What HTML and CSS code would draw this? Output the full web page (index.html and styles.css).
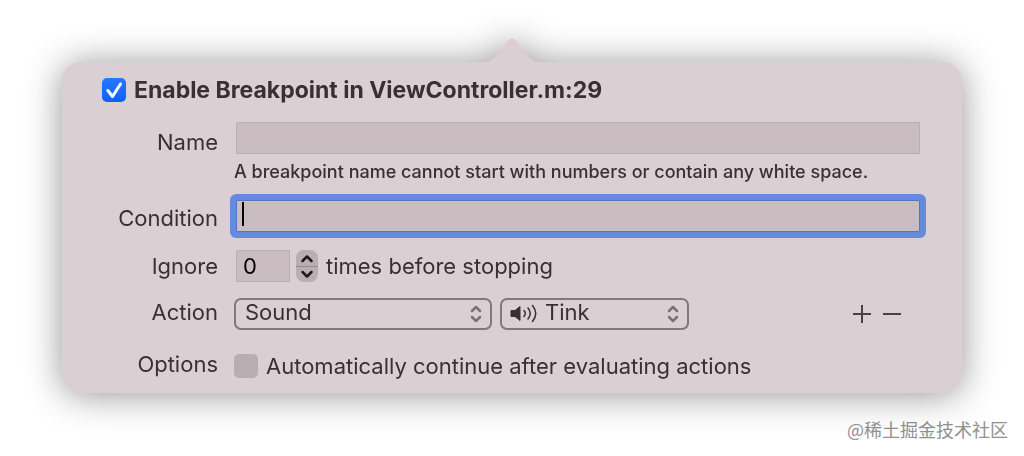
FILE: index.html
```html
<!DOCTYPE html>
<html lang="en">
<head>
<meta charset="utf-8">
<title>Edit Breakpoint</title>
<link rel="stylesheet" href="styles.css">
</head>
<body>
<main class="popover">
  <svg class="arrow" viewBox="0 0 58 25" aria-hidden="true"><path d="M0 25V24C9 24 13 18 18 11L25 2.500Q29 -2 33 2.500L40 11C45 18 49 24 58 24V25Z"/></svg>
  <form class="panel">
    <label class="title"><span class="box"><input class="check" type="checkbox" checked><svg class="tick" viewBox="0 0 24 24" aria-hidden="true"><path d="M5.800 12.500l4.700 6L18.500 6"/></svg></span><span>Enable Breakpoint in ViewController.m:29</span></label>
    <div class="grid">
      <label class="label label-name" for="name">Name</label>
      <div class="stack">
        <input class="field" id="name" type="text">
        <p class="hint">A breakpoint name cannot start with numbers or contain any white space.</p>
      </div>
      <label class="label label-condition" for="condition">Condition</label>
      <div class="focus-wrap">
        <input class="field field-active" id="condition" type="text">
        <span class="caret"></span>
      </div>
      <label class="label" for="ignore">Ignore</label>
      <div class="ignore">
        <input class="field field-count" id="ignore" type="text" value="0">
        <div class="stepper">
          <button type="button" aria-label="Increase"><svg viewBox="0 0 22 16"><path d="M6.500 11L11 6.500l4.500 4.500"/></svg></button>
          <button type="button" aria-label="Decrease"><svg viewBox="0 0 22 16"><path d="M6.500 5L11 9.500 15.500 5"/></svg></button>
        </div>
        <span>times before stopping</span>
      </div>
      <label class="label label-action" for="action">Action</label>
      <div class="actions">
        <div class="picker picker-action">
          <select id="action"><option>Sound</option></select>
          <svg class="chevrons" viewBox="0 0 12 18" aria-hidden="true"><path d="M2 6l4-4 4 4M2 12l4 4 4-4"/></svg>
        </div>
        <div class="picker picker-sound">
          <svg class="speaker" viewBox="0 0 28 20" aria-hidden="true"><path class="cone" d="M1 6.500h4l5-4v14l-5-4H1z"/><path class="wave" d="M14 6.500q2.500 3 0 6M18 4q4.500 5.500 0 11M22.500 1.500q6.500 8 0 16"/></svg>
          <select aria-label="Sound"><option>Tink</option></select>
          <svg class="chevrons" viewBox="0 0 12 18" aria-hidden="true"><path d="M2 6l4-4 4 4M2 12l4 4 4-4"/></svg>
        </div>
        <div class="edit">
          <button type="button" aria-label="Add action"><svg viewBox="0 0 18 18"><path d="M0 9h18M9 0v18"/></svg></button>
          <button type="button" aria-label="Remove action"><svg viewBox="0 0 18 18"><path d="M0 9h18"/></svg></button>
        </div>
      </div>
      <span class="label label-options">Options</span>
      <label class="option"><input class="check" type="checkbox"><span>Automatically continue after evaluating actions</span></label>
    </div>
  </form>
</main>
<footer class="credit" lang="zh-CN">@稀土掘金技术社区</footer>
</body>
</html>
```

FILE: styles.css
```css
* { box-sizing: border-box; }
body {
  margin: 0;
  padding-top: 38px;
  background: #fff;
  color: #393034;
  font: 22px/32px Inter, "Liberation Sans", sans-serif;
}
button, input, select { margin: 0; padding: 0; border: 0; font: inherit; color: inherit; }
button { background: none; cursor: pointer; }
svg { display: block; fill: none; }
.popover {
  margin: 0 62px;
  filter: drop-shadow(0 2px 18px rgba(0, 0, 0, .42));
}
.arrow { width: 58px; height: 25px; margin: 0 auto -1px; fill: #dacfd3; }
.panel {
  padding: 16px 42px 11px 40px;
  border-radius: 20px;
  background: #dacfd3;
}
.title {
  display: flex;
  align-items: center;
  gap: 8px;
  height: 24px;
  margin-bottom: 20px;
  font-size: 23px;
  font-weight: 700;
}
.box { position: relative; flex: none; }
.check {
  appearance: none;
  display: block;
  flex: none;
  width: 24px;
  height: 24px;
  border-radius: 5px;
  background: #b8adb1;
}
.check:checked { background: linear-gradient(#2878ff, #0962fb); }
.tick {
  position: absolute;
  inset: 0;
  visibility: hidden;
  pointer-events: none;
  stroke: #fff;
  stroke-width: 3;
  stroke-linecap: round;
  stroke-linejoin: round;
}
.check:checked + .tick { visibility: visible; }
.grid {
  display: grid;
  grid-template-columns: 116px 1fr;
  column-gap: 16px;
}
.label { text-align: right; }
.label-name { padding-top: 4px; }
.label-condition { padding-top: 2px; }
.label-action { margin-top: -2px; }
.label-options { margin-top: -2px; }
.stack, .focus-wrap, .ignore { padding-left: 2px; margin-bottom: 18px; }
.field {
  display: block;
  width: 100%;
  height: 32px;
  padding: 0 6px;
  border: 1px solid #b9aeb2;
  background: #c9bdc1;
  color: #000;
  outline: none;
}
.hint { margin: 8px 0 0 -2px; font-size: 18px; font-weight: 500; line-height: 20px; }
.focus-wrap { position: relative; }
.field-active { border-color: #5575bd; box-shadow: 0 0 0 6px #668ae0; border-radius: 2px; }
.caret {
  position: absolute;
  left: 8px;
  top: 2px;
  width: 2px;
  height: 24px;
  background: #000;
}
.ignore { display: flex; align-items: center; margin-bottom: 16px; }
.field-count { width: 54px; }
.stepper {
  width: 22px;
  margin: 0 8px 0 6px;
  border-radius: 8px;
  background: #b9aeb2;
  overflow: hidden;
}
.stepper button { display: block; width: 100%; height: 16px; }
.stepper button + button { border-top: 1px solid #978d91; }
.stepper svg { width: 22px; height: 16px; stroke: #1e191b; stroke-width: 2.500; stroke-linecap: round; stroke-linejoin: round; }
.actions { display: flex; align-items: center; gap: 8px; margin-bottom: 20px; }
.picker { position: relative; }
.picker-action { width: 258px; }
.picker-sound { width: 189px; }
.picker select {
  appearance: none;
  display: block;
  width: 100%;
  height: 32px;
  padding: 0 32px 4px 9px;
  border: 2px solid #82777b;
  border-radius: 7px;
  background: none;
  line-height: 24px;
}
.picker-sound select { padding-left: 43px; }
.chevrons {
  position: absolute;
  right: 10px;
  top: 7px;
  width: 12px;
  height: 18px;
  stroke: #7b7074;
  stroke-width: 2.500;
  stroke-linecap: round;
  stroke-linejoin: round;
}
.speaker { position: absolute; left: 10px; top: 6px; width: 28px; height: 20px; }
.cone { fill: #393034; stroke: #393034; stroke-linejoin: round; }
.wave { stroke: #393034; stroke-width: 1.500; stroke-linecap: round; }
.edit { display: flex; gap: 12px; margin-left: auto; padding-right: 19px; }
.edit svg { width: 18px; height: 18px; stroke: #4b4145; stroke-width: 2; }
.option { display: flex; align-items: center; gap: 8px; }
.credit {
  padding: 20px 16px 0 0;
  text-align: right;
  color: #919191;
  font: 18px/32px "Noto Sans CJK SC", sans-serif;
}
```
